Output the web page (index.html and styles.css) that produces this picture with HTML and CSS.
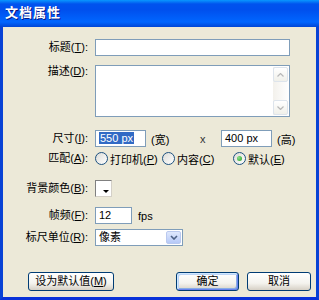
FILE: index.html
```html
<!DOCTYPE html>
<html lang="zh-CN">
<head>
  <meta charset="UTF-8" />
  <meta name="viewport" content="width=device-width, initial-scale=1.0"/>
  <title>文档属性</title>
  <link rel="stylesheet" href="styles.css">
</head>
<body>

  <div class="window">
    <div class="titlebar">文档属性</div>

    <div class="client">
      <div class="row row-title">
        <label class="label">标题(<u>T</u>):</label>
        <div class="field wide"></div>
      </div>

      <div class="row row-desc">
        <label class="label">描述(<u>D</u>):</label>
        <div class="field wide textarea">
          <div class="text-area"></div>
          <div class="scrollbar">
            <div class="sb-btn">
              <svg width="7" height="4" viewBox="0 0 7 4"><path d="M0.5 3.5 L3.5 0.5 L6.5 3.5" fill="none" stroke="#b8b8b8" stroke-width="1.2"/></svg>
            </div>
            <div class="sb-track"></div>
            <div class="sb-btn">
              <svg width="7" height="4" viewBox="0 0 7 4"><path d="M0.5 0.5 L3.5 3.5 L6.5 0.5" fill="none" stroke="#b8b8b8" stroke-width="1.2"/></svg>
            </div>
          </div>
        </div>
      </div>

      <div class="row row-size">
        <label class="label">尺寸(<u>I</u>):</label>
        <div class="field small"><span class="selected">550 px</span></div>
        <span class="unit">(宽)</span>
        <span class="times">x</span>
        <div class="field small">400 px</div>
        <span class="unit-h">(高)</span>
      </div>

      <div class="row row-match">
        <label class="label">匹配(<u>A</u>):</label>
        <div class="radio-item r1"><span class="radio"></span>打印机(<u>P</u>)</div>
        <div class="radio-item r2"><span class="radio"></span>内容(<u>C</u>)</div>
        <div class="radio-item"><span class="radio checked"></span>默认(<u>E</u>)</div>
      </div>

      <div class="row row-color">
        <label class="label">背景颜色(<u>B</u>):</label>
        <div class="swatch"><span class="swatch-arrow"></span></div>
      </div>

      <div class="row row-fps">
        <label class="label">帧频(<u>F</u>):</label>
        <div class="field fps">12</div>
        <span class="fps-unit">fps</span>
      </div>

      <div class="row row-ruler">
        <label class="label">标尺单位(<u>R</u>):</label>
        <div class="select">
          <span class="select-text">像素</span>
          <span class="select-btn">
            <svg width="8" height="5" viewBox="0 0 8 5"><path d="M1 1 L4 4 L7 1" fill="none" stroke="#4d6185" stroke-width="1.6"/></svg>
          </span>
        </div>
      </div>

      <div class="buttons">
        <button class="btn btn-default-set">设为默认值(<u>M</u>)</button>
        <span class="spacer"></span>
        <button class="btn btn-ok">确定</button>
        <button class="btn btn-cancel">取消</button>
      </div>
    </div>
  </div>

</body>
</html>
```

FILE: styles.css
```css
body {
  margin: 0;
  padding: 0;
  background-color: #ece9d8;
  font-family: "Liberation Sans", "Noto Sans CJK SC", sans-serif;
  font-size: 11px;
  color: #000;
}

u {
  text-decoration: underline;
}

.window {
  width: 319px;
  height: 300px;
  display: flex;
  flex-direction: column;
}

.titlebar {
  height: 27px;
  line-height: 26px;
  padding-left: 5px;
  color: #fff;
  font-weight: bold;
  font-size: 13px;
  letter-spacing: 1px;
  text-shadow: 1px 1px #0a1883;
  background: linear-gradient(to bottom, #0997ff 0px, #0053ee 4px, #0050ee 10px, #0066ff 22px, #0045d5 27px);
  box-sizing: border-box;
}

.client {
  flex: 1;
  background-color: #ece9d8;
  border-left: 3px solid #0842d5;
  border-right: 3px solid #0842d5;
  border-bottom: 3px solid #0831d9;
  padding-top: 12px;
  display: flex;
  flex-direction: column;
}

.row {
  display: flex;
  align-items: center;
  height: 17px;
}

.label {
  width: 92px;
  padding-right: 7px;
  box-sizing: border-box;
  text-align: right;
  white-space: nowrap;
  line-height: 13px;
}

.field {
  height: 17px;
  box-sizing: border-box;
  border: 1px solid #7f9db9;
  background: #fff;
  padding-left: 3px;
  line-height: 15px;
  white-space: nowrap;
}

.wide {
  width: 195px;
}

/* description */
.row-desc {
  margin-top: 9px;
  height: 52px;
  align-items: flex-start;
}

.textarea {
  height: 52px;
  display: flex;
  padding: 0;
}

.text-area {
  flex: 1;
}

.scrollbar {
  width: 15px;
  display: flex;
  flex-direction: column;
  background: linear-gradient(to right, #f3f1ec, #fefefe);
  margin: 1px 1px 1px 0;
}

.sb-btn {
  height: 15px;
  box-sizing: border-box;
  border: 1px solid #dde4ec;
  border-radius: 2px;
  background: linear-gradient(to bottom, #ffffff, #f0f0ea);
  display: flex;
  align-items: center;
  justify-content: center;
}

.sb-track {
  flex: 1;
}

/* size */
.row-size {
  margin-top: 13px;
}

.small {
  width: 51px;
}

.selected {
  background: #316ac5;
  color: #fff;
  padding: 0 1px;
}

.unit {
  width: 49px;
  margin-left: 5px;
}

.times {
  width: 21px;
  color: #333;
}

.unit-h {
  margin-left: 5px;
}

/* match radios */
.row-match {
  margin-top: 5px;
  height: 13px;
}

.radio-item {
  display: flex;
  align-items: center;
  white-space: nowrap;
}

.r1 {
  width: 67px;
}

.r2 {
  width: 71px;
}

.radio {
  width: 13px;
  height: 13px;
  box-sizing: border-box;
  border: 1px solid #1c5180;
  border-radius: 50%;
  background: linear-gradient(135deg, #dcdcd7, #ffffff);
  margin-right: 2px;
  position: relative;
}

.radio.checked::after {
  content: "";
  position: absolute;
  left: 3px;
  top: 3px;
  width: 5px;
  height: 5px;
  border-radius: 50%;
  background: radial-gradient(circle at 35% 35%, #8be08b, #21a121);
}

/* background colour */
.row-color {
  margin-top: 15px;
}

.swatch {
  width: 17px;
  height: 17px;
  box-sizing: border-box;
  border: 1px solid #808080;
  border-right-color: #d4d0c8;
  border-bottom-color: #d4d0c8;
  background: #fff;
  position: relative;
}

.swatch-arrow {
  position: absolute;
  right: 2px;
  bottom: 3px;
  width: 0;
  height: 0;
  border-left: 3px solid transparent;
  border-right: 3px solid transparent;
  border-top: 3px solid #000;
}

/* fps */
.row-fps {
  margin-top: 10px;
}

.fps {
  width: 37px;
}

.fps-unit {
  margin-left: 6px;
}

/* ruler */
.row-ruler {
  margin-top: 5px;
}

.select {
  width: 88px;
  height: 17px;
  box-sizing: border-box;
  border: 1px solid #7f9db9;
  background: #fff;
  display: flex;
}

.select-text {
  flex: 1;
  padding-left: 3px;
  line-height: 15px;
}

.select-btn {
  width: 15px;
  margin: 1px;
  box-sizing: border-box;
  border: 1px solid #bac9ef;
  border-radius: 2px;
  background: linear-gradient(to bottom, #dfe8fd, #b6c9f7);
  display: flex;
  align-items: center;
  justify-content: center;
}

/* buttons */
.buttons {
  display: flex;
  margin-top: 26px;
  padding: 0 5px 0 25px;
  height: 19px;
}

.spacer {
  flex: 1;
}

.btn {
  height: 19px;
  box-sizing: border-box;
  border: 1px solid #003c74;
  border-radius: 3px;
  background: linear-gradient(to bottom, #ffffff 0%, #f4f3ee 60%, #d6d0c5 100%);
  font-family: "Liberation Sans", "Noto Sans CJK SC", sans-serif;
  font-size: 11px;
  padding: 0;
  line-height: 15px;
  cursor: pointer;
}

.btn-default-set {
  width: 86px;
}

.btn-ok {
  width: 63px;
  box-shadow: inset 1px 1px 0 #cee7ff, inset -1px -1px 0 #6982ee, inset 2px 2px 0 #bcd4f6, inset -2px -2px 0 #89ade4;
}

.btn-cancel {
  width: 64px;
  margin-left: 8px;
}
```
